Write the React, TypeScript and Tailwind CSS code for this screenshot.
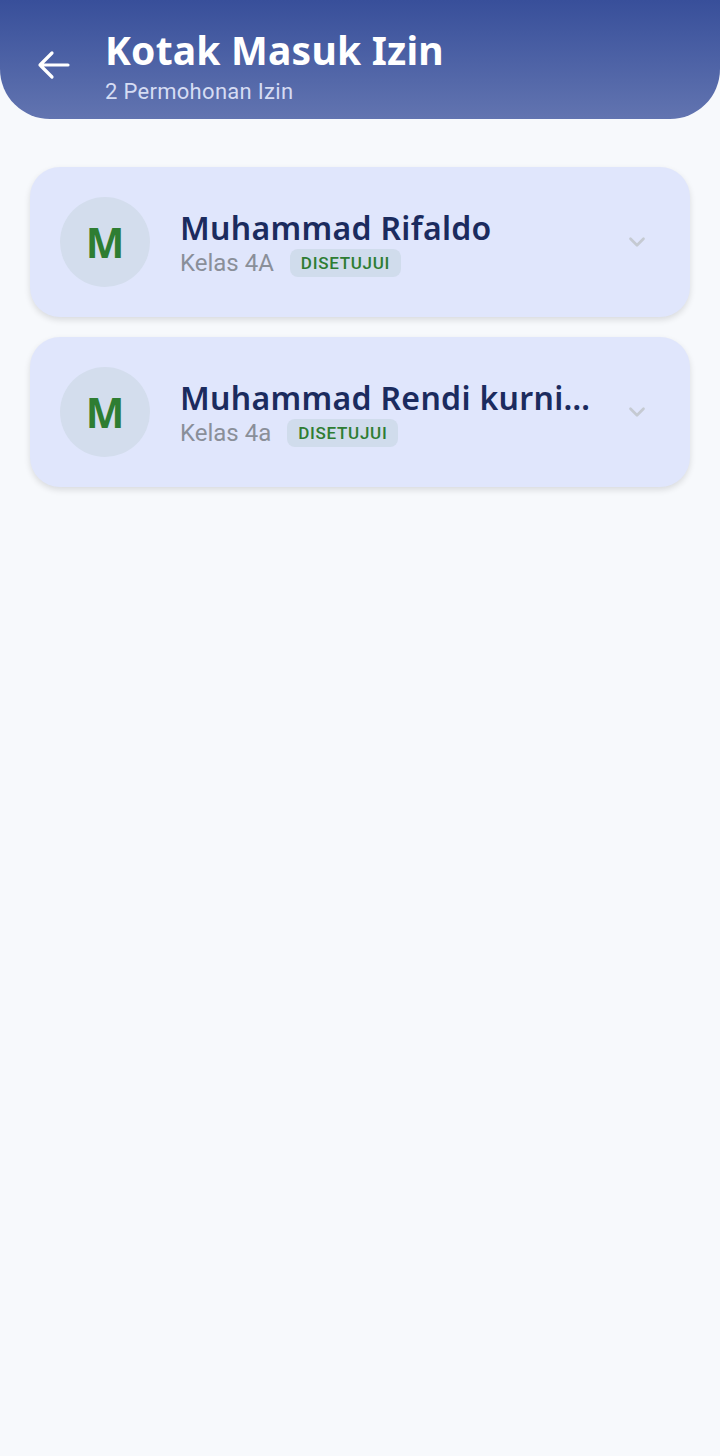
import { ChevronDown } from "lucide-react";

type Izin = {
    name: string;
    kelas: string;
    status: string;
};

const items: Izin[] = [
    { name: "Muhammad Rifaldo", kelas: "Kelas 4A", status: "DISETUJUI" },
    { name: "Muhammad Rendi kurniawan", kelas: "Kelas 4a", status: "DISETUJUI" },
];

const roboto = { fontFamily: 'Roboto, "Noto Sans", sans-serif' };

const IzinCard = ({ item }: { item: Izin }) => {
    return (
        <div className="flex h-[150px] items-center rounded-[30px] bg-[#e0e6fc] pl-[30px] pr-[40px] shadow-[0_3px_6px_rgba(0,0,0,0.12)]">
            <div className="flex h-[90px] w-[90px] shrink-0 items-center justify-center rounded-full bg-[#d3dded]">
                <span className="text-[41px] font-bold leading-none text-[#2e7d32]">
                    {item.name.charAt(0)}
                </span>
            </div>
            <div className="ml-[30px] flex min-w-0 flex-1 flex-col">
                <span className="truncate pr-[26px] text-[32px] font-semibold leading-[42px] tracking-[0.3px] text-[#1b2b5e]">
                    {item.name}
                </span>
                <div className="flex items-center gap-[16px]">
                    <span style={roboto} className="text-[24px] leading-[28px] text-[#8a8f99]">{item.kelas}</span>
                    <span style={roboto} className="rounded-[8px] bg-[#d0dcec] px-[11px] py-[4px] text-[17px] font-medium leading-[20px] tracking-[0.7px] text-[#2e7d32]">
                        {item.status}
                    </span>
                </div>
            </div>
            <ChevronDown className="shrink-0 text-[#c5cad2]" size={26} strokeWidth={2.5} />
        </div>
    );
};

const App = () => {
    return (
        <div
            className="min-h-[1456px] w-[720px] bg-[#f7f9fc]"
            style={{ fontFamily: '"Noto Sans", "Open Sans", sans-serif' }}
        >
            <div className="flex h-[119px] items-start rounded-b-[50px] bg-gradient-to-b from-[#384f9a] to-[#6274b0] pl-[36px] pt-[27px]">
                <svg className="mt-[23px]" width="34" height="30" viewBox="0 0 34 30" fill="none">
                    <path d="M32 15H4M16 3L4 15L16 27" stroke="white" strokeWidth="3.2" strokeLinecap="round" strokeLinejoin="round" />
                </svg>
                <div className="ml-[35px] flex flex-col">
                    <span className="text-[39px] font-bold leading-[46px] tracking-[0.2px] text-white">Kotak Masuk Izin</span>
                    <span style={roboto} className="mt-[6px] text-[22px] leading-[26px] tracking-[0.3px] text-[#d5dcf3]">2 Permohonan Izin</span>
                </div>
            </div>
            <div className="flex flex-col gap-[20px] px-[30px] pt-[48px]">
                {items.map((item) => (
                    <IzinCard key={item.name} item={item} />
                ))}
            </div>
        </div>
    );
};

export default App;
